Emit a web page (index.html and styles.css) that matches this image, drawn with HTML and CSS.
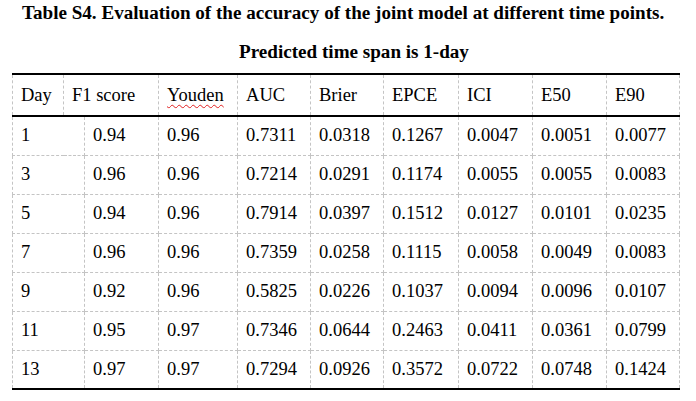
FILE: index.html
```html
<!DOCTYPE html>
<html>
<head>
<meta charset="utf-8">
<link rel="stylesheet" href="styles.css">
</head>
<body>
<div class="page">
  <h1 class="title">Table S4. Evaluation of the accuracy of the joint model at different time points.</h1>
  <h2 class="subtitle">Predicted time span is 1-day</h2>
  <table class="data">
    <colgroup>
      <col class="c-a"><col class="c-b"><col class="c-c"><col class="c-d"><col class="c-e">
      <col class="c-f"><col class="c-g"><col class="c-h"><col class="c-i"><col class="c-j">
    </colgroup>
    <thead>
      <tr>
        <th>Day</th>
        <th colspan="2">F1 score</th>
        <th><span class="spell">Youden</span></th>
        <th>AUC</th>
        <th>Brier</th>
        <th>EPCE</th>
        <th>ICI</th>
        <th>E50</th>
        <th>E90</th>
      </tr>
    </thead>
    <tbody>
      <tr><td colspan="2">1</td><td>0.94</td><td>0.96</td><td>0.7311</td><td>0.0318</td><td>0.1267</td><td>0.0047</td><td>0.0051</td><td>0.0077</td></tr>
      <tr><td colspan="2">3</td><td>0.96</td><td>0.96</td><td>0.7214</td><td>0.0291</td><td>0.1174</td><td>0.0055</td><td>0.0055</td><td>0.0083</td></tr>
      <tr><td colspan="2">5</td><td>0.94</td><td>0.96</td><td>0.7914</td><td>0.0397</td><td>0.1512</td><td>0.0127</td><td>0.0101</td><td>0.0235</td></tr>
      <tr><td colspan="2">7</td><td>0.96</td><td>0.96</td><td>0.7359</td><td>0.0258</td><td>0.1115</td><td>0.0058</td><td>0.0049</td><td>0.0083</td></tr>
      <tr><td colspan="2">9</td><td>0.92</td><td>0.96</td><td>0.5825</td><td>0.0226</td><td>0.1037</td><td>0.0094</td><td>0.0096</td><td>0.0107</td></tr>
      <tr><td colspan="2">11</td><td>0.95</td><td>0.97</td><td>0.7346</td><td>0.0644</td><td>0.2463</td><td>0.0411</td><td>0.0361</td><td>0.0799</td></tr>
      <tr><td colspan="2">13</td><td>0.97</td><td>0.97</td><td>0.7294</td><td>0.0926</td><td>0.3572</td><td>0.0722</td><td>0.0748</td><td>0.1424</td></tr>
    </tbody>
  </table>
</div>
</body>
</html>
```

FILE: styles.css
```css
html, body {
  margin: 0;
  padding: 0;
  background: #ffffff;
}

.page {
  font-family: "Liberation Serif", "Times New Roman", serif;
  color: #000000;
  padding-top: 3px;
}

.title {
  margin: 0;
  padding-left: 22px;
  font-size: 19.1px;
  line-height: 20px;
  font-weight: bold;
  white-space: nowrap;
}

.subtitle {
  margin: 0;
  margin-top: 19px;
  padding-left: 12px;
  text-align: center;
  font-size: 19.1px;
  line-height: 20px;
  font-weight: bold;
}

.data {
  margin-top: 11px;
  margin-left: 12px;
  width: 667px;
  table-layout: fixed;
  border-collapse: collapse;
  font-size: 18.5px;
}

.c-a { width: 51px; }
.c-b { width: 21px; }
.c-c { width: 74px; }
.c-d { width: 79px; }
.c-e { width: 73px; }
.c-f { width: 73px; }
.c-g { width: 75px; }
.c-h { width: 74px; }
.c-i { width: 74px; }
.c-j { width: 73px; }

.data th,
.data td {
  border: 1px dashed #c4c4c4;
  padding: 0 0 0 8px;
  text-align: left;
  vertical-align: middle;
  font-weight: normal;
  white-space: nowrap;
}

.data thead tr {
  height: 42px;
}

.data thead th {
  border-top: 2px solid #000;
  border-bottom: 2px solid #000;
}

.data tbody tr {
  height: 39px;
}

.data tbody tr:last-child td {
  border-bottom: 2px solid #000;
}

.spell {
  text-decoration: underline wavy #e02020;
  text-decoration-thickness: 1px;
  text-underline-offset: 3px;
}
```
